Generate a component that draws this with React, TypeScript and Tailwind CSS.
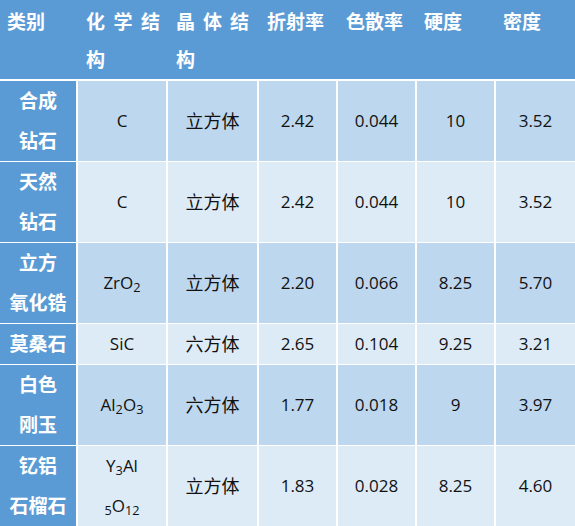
import React from "react";

type Row = {
  name: React.ReactNode;
  formula: React.ReactNode;
  crystal: string;
  ri: string;
  disp: string;
  hard: string;
  dens: string;
  tall: boolean;
};

const rows: Row[] = [
  { name: <>合成<br />钻石</>, formula: "C", crystal: "立方体", ri: "2.42", disp: "0.044", hard: "10", dens: "3.52", tall: true },
  { name: <>天然<br />钻石</>, formula: "C", crystal: "立方体", ri: "2.42", disp: "0.044", hard: "10", dens: "3.52", tall: true },
  { name: <>立方<br />氧化锆</>, formula: <>ZrO<sub>2</sub></>, crystal: "立方体", ri: "2.20", disp: "0.066", hard: "8.25", dens: "5.70", tall: true },
  { name: "莫桑石", formula: "SiC", crystal: "六方体", ri: "2.65", disp: "0.104", hard: "9.25", dens: "3.21", tall: false },
  { name: <>白色<br />刚玉</>, formula: <>Al<sub>2</sub>O<sub>3</sub></>, crystal: "六方体", ri: "1.77", disp: "0.018", hard: "9", dens: "3.97", tall: true },
  { name: <>钇铝<br />石榴石</>, formula: <>Y<sub>3</sub>Al<br /><sub>5</sub>O<sub>12</sub></>, crystal: "立方体", ri: "1.83", disp: "0.028", hard: "8.25", dens: "4.60", tall: true },
];

const cols = "grid grid-cols-[76px_88px_89px_77px_77px_77px_79px] gap-x-[2px]";

export default function App() {
  return (
    <div
      className="w-[575px] h-[526px] bg-white flex flex-col gap-y-[2px] overflow-hidden"
      style={{ fontFamily: '"Open Sans", "Noto Sans CJK SC", sans-serif' }}
    >
      {/* 表头 */}
      <div className={`${cols} h-[79px] shrink-0 bg-[#5b9bd5] text-white font-bold text-[19px] leading-[38px] pt-[3px] whitespace-nowrap`}>
        <div className="pl-[7px]">类别</div>
        <div className="pl-[8px] tracking-[8.5px]">化学结<br />构</div>
        <div className="pl-[8px] tracking-[8px]">晶体结<br />构</div>
        <div className="pl-[8px]">折射率</div>
        <div className="pl-[8px]">色散率</div>
        <div className="pl-[7px]">硬度</div>
        <div className="pl-[7px]">密度</div>
      </div>

      {rows.map((r, i) => {
        const bg = i % 2 === 0 ? "bg-[#bdd7ee]" : "bg-[#ddebf7]";
        const cell = `${bg} flex items-center justify-center text-center text-[#111] text-[17px]`;
        return (
          <div
            key={i}
            className={`${cols} shrink-0 ${r.tall ? (i === rows.length - 1 ? "h-[80px]" : "h-[79px]") : "h-[39px]"}`}
          >
            <div className="bg-[#5b9bd5] flex items-center justify-center text-center text-white font-bold text-[19px] leading-[40px] whitespace-nowrap">
              <div>{r.name}</div>
            </div>
            <div className={`${cell} leading-[40px]`}>
              <div>{r.formula}</div>
            </div>
            <div className={`${cell} text-[18px]`}>{r.crystal}</div>
            <div className={cell}>{r.ri}</div>
            <div className={cell}>{r.disp}</div>
            <div className={cell}>{r.hard}</div>
            <div className={cell}>{r.dens}</div>
          </div>
        );
      })}
    </div>
  );
}
